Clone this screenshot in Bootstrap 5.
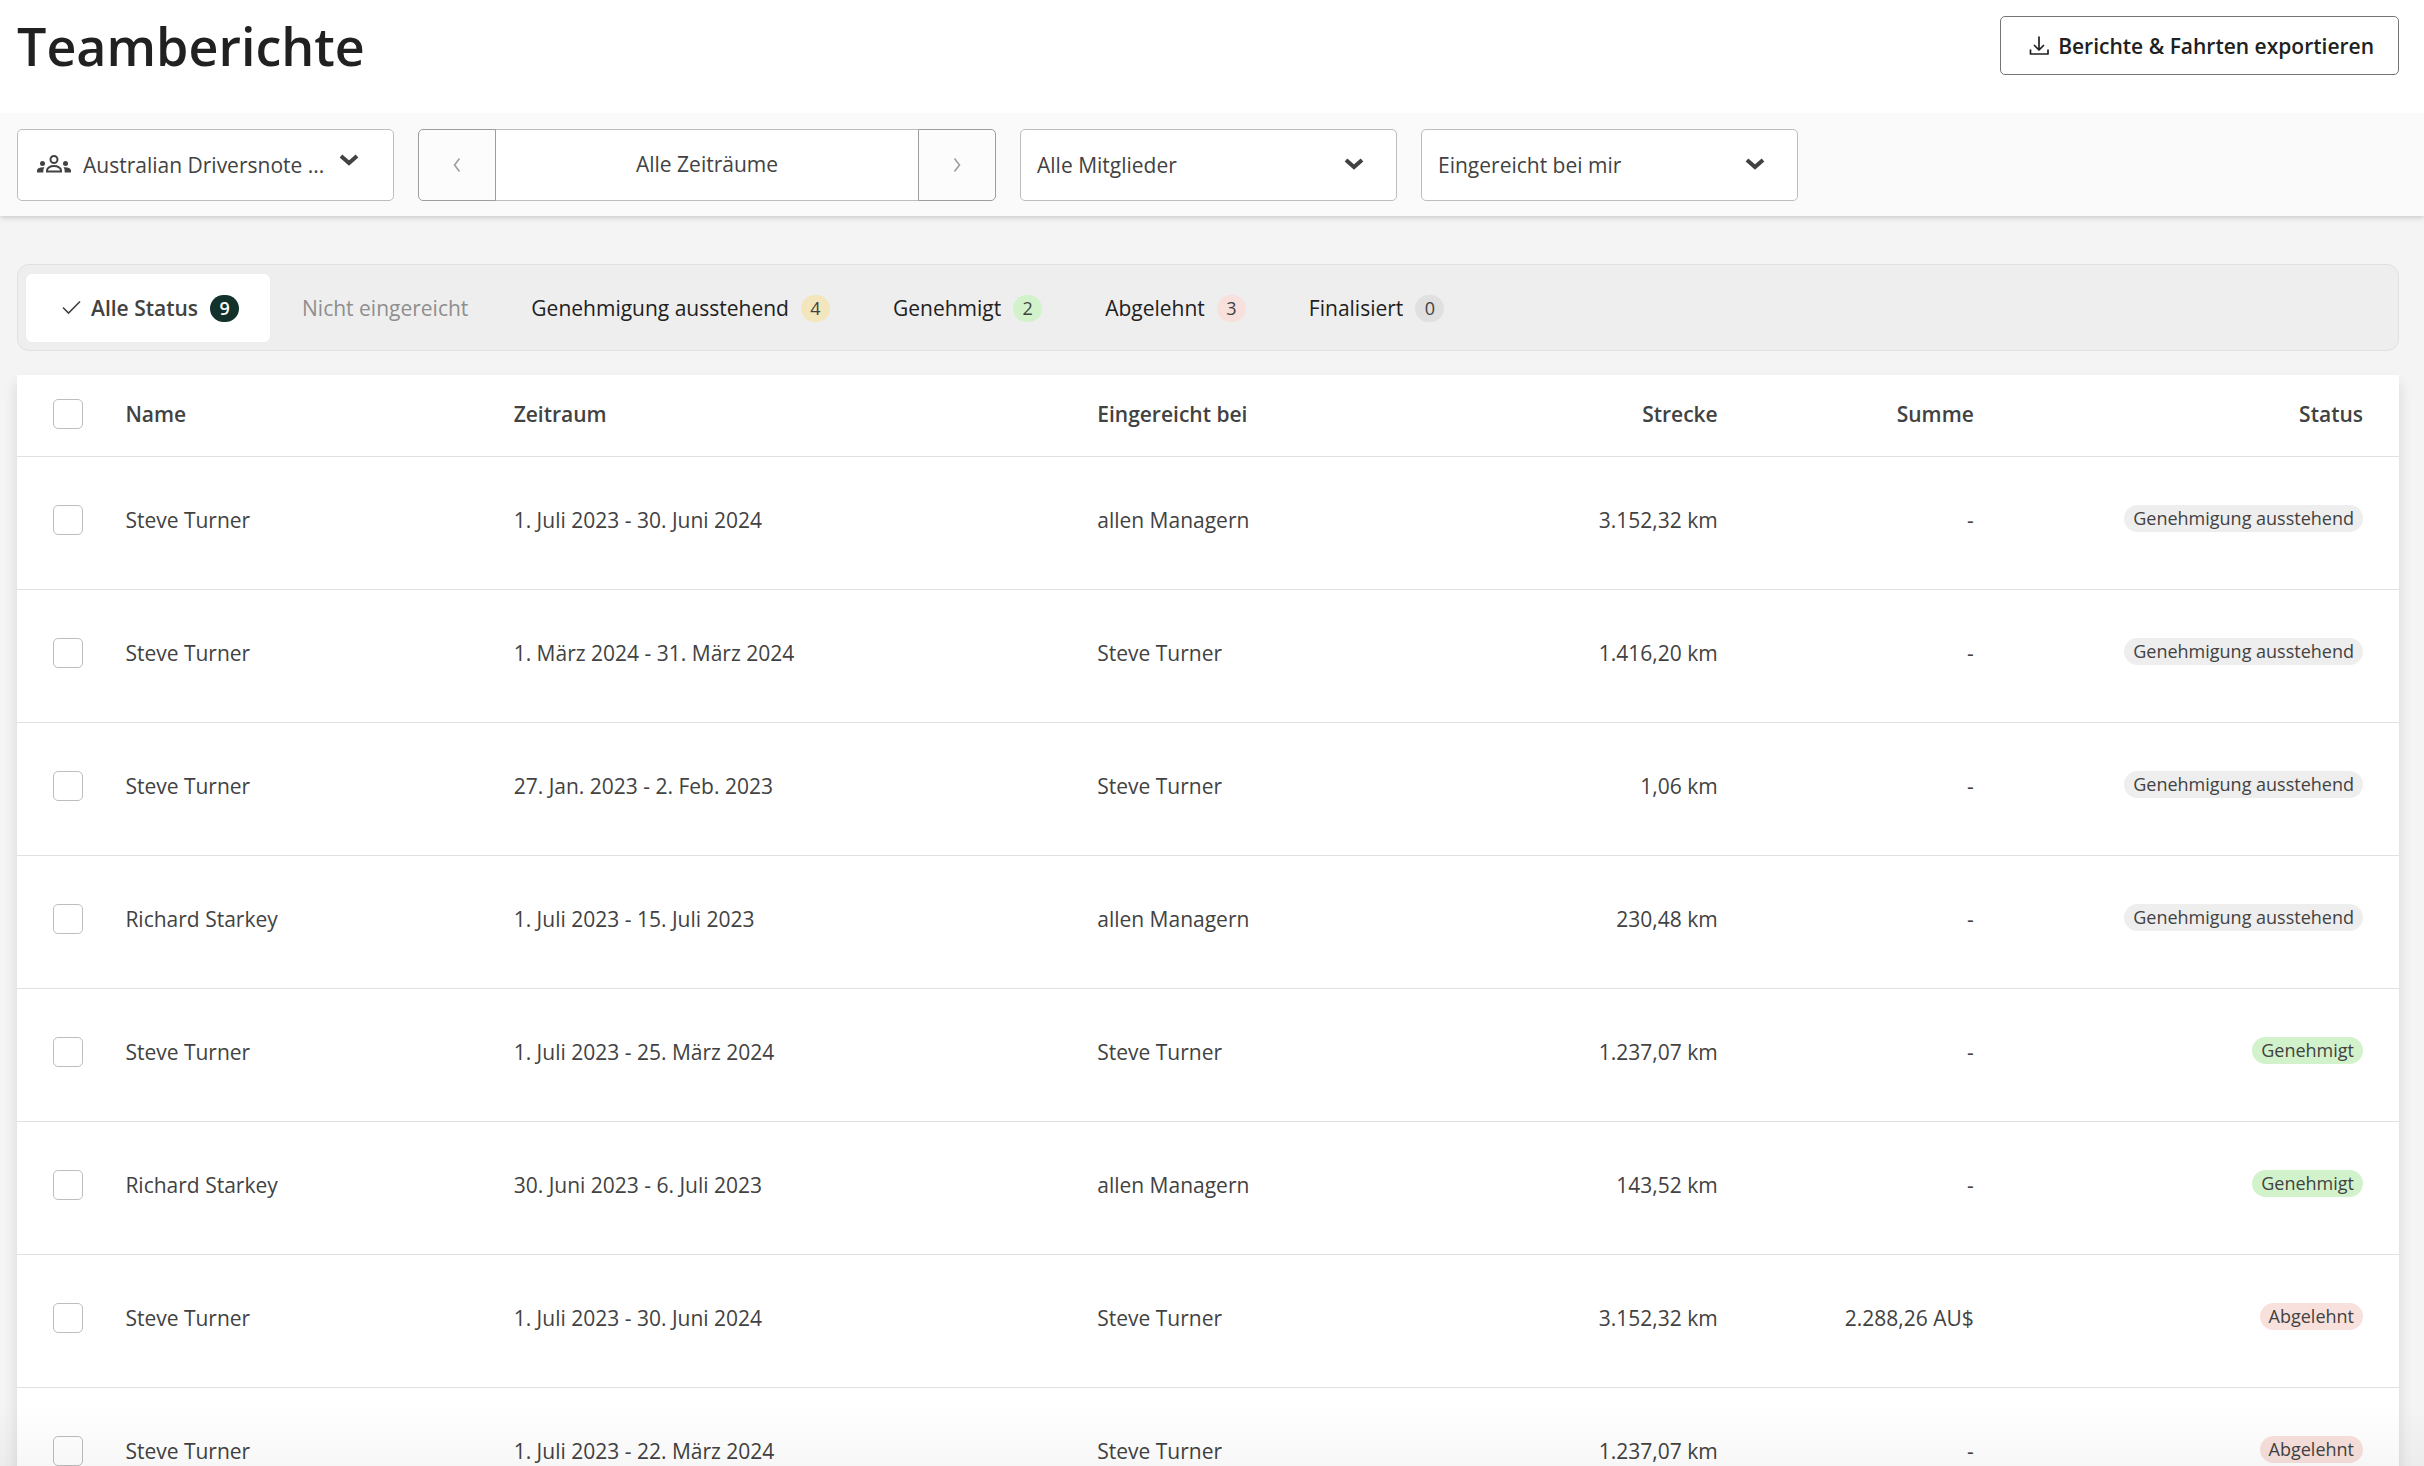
<!DOCTYPE html>
<html lang="de">
<head>
<meta charset="utf-8">
<meta name="viewport" content="width=device-width, initial-scale=1">
<title>Teamberichte</title>
<link href="https://cdn.jsdelivr.net/npm/bootstrap@5.3.0/dist/css/bootstrap.min.css" rel="stylesheet">
<style>
  body { font-family: "Open Sans", sans-serif; font-size: 21px; line-height: 30px; color: #424242; background: #f4f4f4; }
  .page-x { padding-left: 17px; padding-right: 25px; }
  .page-head { padding-top: 16px; padding-bottom: 38px; background: #fff; z-index: 3; }
  .page-title { font-size: 52px; line-height: 59px; font-weight: 600; color: #212121; }
  .export-btn { --bs-btn-font-size: 21px; --bs-btn-line-height: 30px; --bs-btn-padding-x: 24px; --bs-btn-padding-y: 14px; --bs-btn-font-weight: 600; --bs-btn-color: #212121; --bs-btn-border-color: #757575; --bs-btn-border-radius: 5px; --bs-btn-bg: #fff; height: 59px; }
  .filters { padding-top: 16px; padding-bottom: 15px; background: #fafafa; box-shadow: 0 1px 6px rgba(0,0,0,.22); z-index: 2; }
  .filter-box { width: 377px; }
  .filter-box .form-select { height: 72px; padding: 1px 64px 0 16px; font-size: 21px; color: #424242; border-color: #bdbdbd; border-radius: 5px;
    background-image: url("data:image/svg+xml,%3Csvg xmlns='http://www.w3.org/2000/svg' viewBox='0 0 20 12'%3E%3Cpath fill='none' stroke='%23424242' stroke-width='4' d='M2 2l8 7 8-7'/%3E%3C/svg%3E"); background-size: 20px 12px; background-position: right 32px top 28px; }
  .filter-box .with-icon { padding-left: 65px; padding-right: 60px; background-position: right 34px top 24px; }
  .team-icon { left: 20px; top: 24px; pointer-events: none; }
  .period { width: 578px; height: 72px; }
  .period .btn { width: 78px; --bs-btn-border-color: #9e9e9e; --bs-btn-disabled-border-color: #9e9e9e; --bs-btn-disabled-opacity: 1; --bs-btn-bg: #fcfcfc; --bs-btn-disabled-bg: #fcfcfc; --bs-btn-border-radius: 5px; }
  .period .form-control { font-size: 21px; color: #424242; border-color: #bdbdbd; background: #fff; }
  .status-tabs { margin-top: 48px; padding: 9px 8px 8px; gap: 1px; background: #eee; border: 1px solid #e0e0e0; border-radius: 12px; }
  .status-tabs .nav-link { padding: 19px 31px; line-height: 30px; color: #212121; --bs-nav-link-font-size: 21px; border-radius: 6px; }
  .status-tabs .nav-link.active { background: #fff; color: #424242; font-weight: 600; }
  .status-tabs .nav-link.disabled { color: #8e8e8e; }
  .count-pill { width: 29px; height: 27px; margin-left: 12px; font-size: 18px; line-height: 27px; font-weight: 400; color: #424242; border-radius: 14px; }
  .count-pill.bg-all { background: #12322b; color: #fff; font-weight: 600; }
  .bg-pending { background: #f4e6bc; }
  .bg-ok { background: #d2f2cc; }
  .bg-no { background: #f8e1dd; }
  .bg-final { background: #e0e0e0; }
  .bg-wait { background: #eee; }
  .report-card { margin-top: 24px; background: #fff; box-shadow: 0 8px 14px rgba(0,0,0,.12); }
  .report-table { table-layout: fixed; color: #424242; --bs-table-color: #424242; --bs-table-bg: transparent; border-color: #e0e0e0; }
  .report-table th { padding: 24px 0 27px; font-weight: 600; }
  .report-table td { padding: 48px 0 54px; }
  .report-table tr > :first-child { padding-left: 36px; }
  .report-table tr > :last-child { padding-right: 36px; }
  .report-table .form-check-input { width: 30px; height: 30px; margin: 0; border-color: #bdbdbd; border-radius: 5px; }
  .status-pill { height: 27px; padding: 0 9px; margin-bottom: 3px; font-size: 18px; line-height: 27px; border-radius: 14px; }
  .w-check { width: 4.55%; } .w-name { width: 16.3%; } .w-period { width: 24.5%; } .w-to { width: 15.3%; } .w-dist { width: 10.75%; } .w-sum { width: 10.75%; }
  .bottom-fade { height: 60px; background: linear-gradient(rgba(0,0,0,0), rgba(0,0,0,.03)); pointer-events: none; }
</style>
<script src="https://cdn.jsdelivr.net/npm/bootstrap@5.3.0/dist/js/bootstrap.bundle.min.js"></script>
</head>
<body class="vh-100 d-flex flex-column overflow-hidden">
<header class="page-head page-x position-relative d-flex justify-content-between align-items-center">
  <h1 class="page-title mb-0">Teamberichte</h1>
  <button type="button" class="btn export-btn d-inline-flex align-items-center">
    <svg class="me-2" width="25" height="28" viewBox="0 0 25 28" fill="none" stroke="#212121" stroke-width="1.700" stroke-linecap="round" stroke-linejoin="round" aria-hidden="true"><path d="M14 5v12.500M9.500 13.500l4.500 4.500 4.500-4.500M5.500 18v4h17.500v-4"/></svg>
    Berichte &amp; Fahrten exportieren
  </button>
</header>

<form class="filters page-x position-relative d-flex flex-wrap gap-4">
  <div class="filter-box position-relative">
    <select class="form-select with-icon" aria-label="Team"><option>Australian Driversnote ...</option></select>
    <svg class="team-icon position-absolute" width="34" height="24" viewBox="0 0 34 24" fill="#424242" aria-hidden="true"><circle cx="17" cy="6.500" r="3.500" fill="none" stroke="#424242" stroke-width="2"/><path d="M10 18.500v-1c0-2.500 3-4.500 7-4.500s7 2 7 4.500v1z" fill="none" stroke="#424242" stroke-width="2"/><circle cx="5.500" cy="10.500" r="2.500"/><circle cx="28.500" cy="10.500" r="2.500"/><path d="M0 19.500v-2c0-2 2.500-3.500 7.500-3.200-1 1.200-1.200 2.300-1.200 5.200zM34 19.500v-2c0-2-2.500-3.500-7.500-3.200 1 1.200 1.200 2.300 1.200 5.200z"/></svg>
  </div>
  <div class="period input-group flex-nowrap">
    <button type="button" class="btn d-flex align-items-center justify-content-center" disabled aria-label="Zurück"><svg width="10" height="16" viewBox="0 0 10 16" fill="none" stroke="#9e9e9e" stroke-width="1.600" aria-hidden="true"><path d="M7.500 1.500L2.500 8l5 6.500"/></svg></button>
    <input class="form-control text-center" type="text" value="Alle Zeiträume" aria-label="Zeitraum" readonly>
    <button type="button" class="btn d-flex align-items-center justify-content-center" disabled aria-label="Weiter"><svg width="10" height="16" viewBox="0 0 10 16" fill="none" stroke="#9e9e9e" stroke-width="1.600" aria-hidden="true"><path d="M2.500 1.500l5 6.500-5 6.500"/></svg></button>
  </div>
  <div class="filter-box"><select class="form-select" aria-label="Mitglieder"><option>Alle Mitglieder</option></select></div>
  <div class="filter-box"><select class="form-select" aria-label="Eingereicht bei"><option>Eingereicht bei mir</option></select></div>
</form>

<main class="page-x">
  <nav class="status-tabs nav" aria-label="Status">
    <button type="button" class="nav-link border-0 active d-flex align-items-center"><svg class="me-2" width="26" height="24" viewBox="0 0 26 24" fill="none" stroke="#424242" stroke-width="1.600" aria-hidden="true"><path d="M6 11.500l5.500 5.500L23 5.500"/></svg>Alle Status<span class="count-pill bg-all">9</span></button>
    <button type="button" class="nav-link border-0 bg-transparent disabled" disabled>Nicht eingereicht</button>
    <button type="button" class="nav-link border-0 bg-transparent d-flex align-items-center">Genehmigung ausstehend<span class="count-pill bg-pending">4</span></button>
    <button type="button" class="nav-link border-0 bg-transparent d-flex align-items-center">Genehmigt<span class="count-pill bg-ok">2</span></button>
    <button type="button" class="nav-link border-0 bg-transparent d-flex align-items-center">Abgelehnt<span class="count-pill bg-no">3</span></button>
    <button type="button" class="nav-link border-0 bg-transparent d-flex align-items-center">Finalisiert<span class="count-pill bg-final">0</span></button>
  </nav>

  <section class="report-card">
    <table class="report-table table align-middle mb-0">
      <thead>
        <tr><th class="w-check"><input class="form-check-input d-block" type="checkbox" aria-label="Alle auswählen"></th><th class="w-name">Name</th><th class="w-period">Zeitraum</th><th class="w-to">Eingereicht bei</th><th class="w-dist text-end">Strecke</th><th class="w-sum text-end">Summe</th><th class="text-end">Status</th></tr>
      </thead>
      <tbody>
        <tr><td><input class="form-check-input d-block" type="checkbox" aria-label="Bericht auswählen"></td><td>Steve Turner</td><td>1. Juli 2023 - 30. Juni 2024</td><td>allen Managern</td><td class="text-end">3.152,32 km</td><td class="text-end">-</td><td><div class="d-flex justify-content-end"><span class="status-pill bg-wait">Genehmigung ausstehend</span></div></td></tr>
        <tr><td><input class="form-check-input d-block" type="checkbox" aria-label="Bericht auswählen"></td><td>Steve Turner</td><td>1. März 2024 - 31. März 2024</td><td>Steve Turner</td><td class="text-end">1.416,20 km</td><td class="text-end">-</td><td><div class="d-flex justify-content-end"><span class="status-pill bg-wait">Genehmigung ausstehend</span></div></td></tr>
        <tr><td><input class="form-check-input d-block" type="checkbox" aria-label="Bericht auswählen"></td><td>Steve Turner</td><td>27. Jan. 2023 - 2. Feb. 2023</td><td>Steve Turner</td><td class="text-end">1,06 km</td><td class="text-end">-</td><td><div class="d-flex justify-content-end"><span class="status-pill bg-wait">Genehmigung ausstehend</span></div></td></tr>
        <tr><td><input class="form-check-input d-block" type="checkbox" aria-label="Bericht auswählen"></td><td>Richard Starkey</td><td>1. Juli 2023 - 15. Juli 2023</td><td>allen Managern</td><td class="text-end">230,48 km</td><td class="text-end">-</td><td><div class="d-flex justify-content-end"><span class="status-pill bg-wait">Genehmigung ausstehend</span></div></td></tr>
        <tr><td><input class="form-check-input d-block" type="checkbox" aria-label="Bericht auswählen"></td><td>Steve Turner</td><td>1. Juli 2023 - 25. März 2024</td><td>Steve Turner</td><td class="text-end">1.237,07 km</td><td class="text-end">-</td><td><div class="d-flex justify-content-end"><span class="status-pill bg-ok">Genehmigt</span></div></td></tr>
        <tr><td><input class="form-check-input d-block" type="checkbox" aria-label="Bericht auswählen"></td><td>Richard Starkey</td><td>30. Juni 2023 - 6. Juli 2023</td><td>allen Managern</td><td class="text-end">143,52 km</td><td class="text-end">-</td><td><div class="d-flex justify-content-end"><span class="status-pill bg-ok">Genehmigt</span></div></td></tr>
        <tr><td><input class="form-check-input d-block" type="checkbox" aria-label="Bericht auswählen"></td><td>Steve Turner</td><td>1. Juli 2023 - 30. Juni 2024</td><td>Steve Turner</td><td class="text-end">3.152,32 km</td><td class="text-end">2.288,26 AU$</td><td><div class="d-flex justify-content-end"><span class="status-pill bg-no">Abgelehnt</span></div></td></tr>
        <tr><td><input class="form-check-input d-block" type="checkbox" aria-label="Bericht auswählen"></td><td>Steve Turner</td><td>1. Juli 2023 - 22. März 2024</td><td>Steve Turner</td><td class="text-end">1.237,07 km</td><td class="text-end">-</td><td><div class="d-flex justify-content-end"><span class="status-pill bg-no">Abgelehnt</span></div></td></tr>
      </tbody>
    </table>
  </section>
</main>
<div class="bottom-fade fixed-bottom"></div>
</body>
</html>
